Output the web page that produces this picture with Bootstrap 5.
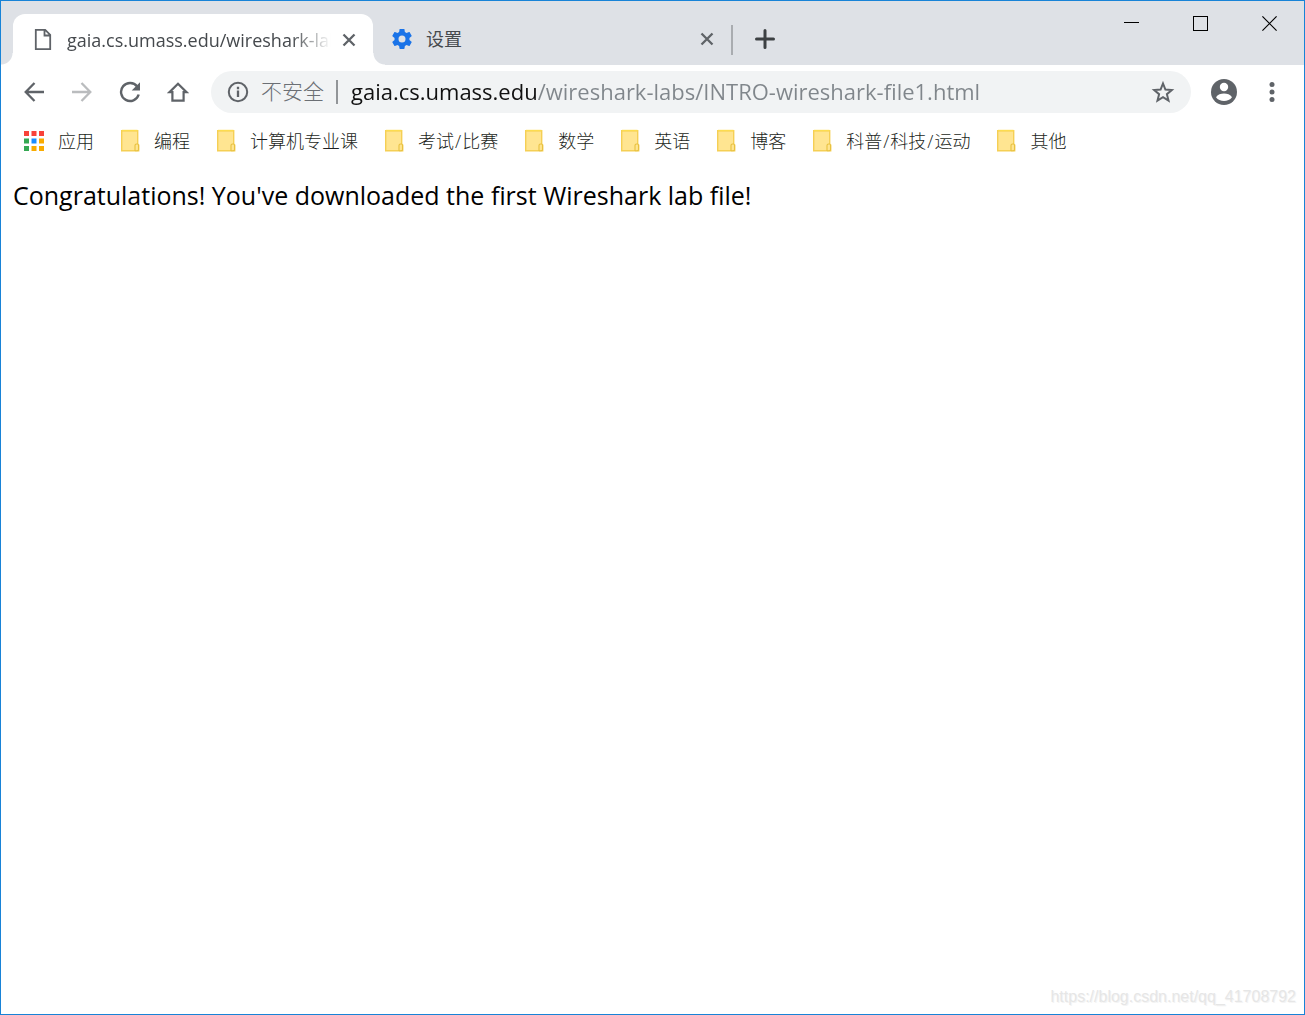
<!DOCTYPE html>
<html lang="zh-CN">
<head>
<meta charset="utf-8">
<meta name="viewport" content="width=device-width, initial-scale=1">
<title>gaia.cs.umass.edu/wireshark-labs/INTRO-wireshark-file1.html</title>
<link href="https://cdn.jsdelivr.net/npm/bootstrap@5.3.0/dist/css/bootstrap.min.css" rel="stylesheet">
<style>
  body { font-family: "Open Sans", "Noto Sans CJK SC", sans-serif; color: #000; }
  .browser { border: 1px solid #1883d7; }
  .tab-strip { background: #dee1e6; height: 64px; padding-left: 12px; }
  .tab-item { width: 360px; height: 50px; margin-top: 13px; padding: 0 14px 0 18px; font-size: 18px; color: #45494d; }
  .tab-on { background: #fff; border-radius: 12px 12px 0 0; height: 51px; }
  .tab-off { width: 358px; padding-left: 17px; }
  .tab-on::before, .tab-on::after { content: ""; position: absolute; bottom: 0; width: 12px; height: 12px; }
  .tab-on::before { right: 100%; background: radial-gradient(circle at 0 0, transparent 11px, #fff 12px); }
  .tab-on::after { left: 100%; background: radial-gradient(circle at 100% 0, transparent 11px, #fff 12px); }
  .tab-title { margin-left: 12px; height: 28px; line-height: 28px; color: inherit; }
  .tab-fade { -webkit-mask-image: linear-gradient(to right, #000 85%, transparent); mask-image: linear-gradient(to right, #000 85%, transparent); }
  .tab-sep { width: 2px; height: 30px; background: #a9acb0; margin-top: 13px; }
  .plain-btn { border: 0; background: none; padding: 0; display: flex; align-items: center; justify-content: center; flex: none; color: #5f6368; }
  .close-btn { width: 20px; height: 20px; }
  .new-tab { width: 64px; height: 50px; margin-top: 13px; color: #3c4043; }
  .win-btn { width: 69px; height: 44px; color: #000; }
  .tool-row { padding: 6px 8px 6px 9px; }
  .tool-btn { width: 48px; height: 42px; }
  .omnibox { background: #f1f3f4; border-radius: 21px; height: 42px; margin: 0 9px; padding: 0 16px; color: #5f6368; }
  .site-note { font-size: 21px; margin-left: 12px; color: #6b6f74; font-weight: 300; }
  .omni-sep { width: 2px; height: 24px; background: #929598; margin: 0 13px 0 12px; }
  .url-box { border: 0; outline: 0; padding: 0; height: 32px; margin-bottom: 2px; font-size: 22px; color: transparent;
    background: linear-gradient(to right, #111 187px, #80868b 187px); -webkit-background-clip: text; background-clip: text; }
  .mark-row { padding: 0 10px; height: 44px; }
  .mark-link { padding: 0 13px; gap: 14px; font-size: 18px; font-weight: 300; line-height: 28px; color: #1c1f22; }
  .slash { margin: 0 1px; }
  .page-text { font-size: 25px; line-height: 36px; padding: 14px 12px; }
  .watermark { right: 8px; bottom: 5px; font: 16px/24px "Liberation Sans", sans-serif; color: #e6e6e6; text-shadow: 1px 1px 0 #f4f4f4; }
</style>
</head>
<body>
<svg class="d-none" aria-hidden="true">
  <symbol id="folder" viewBox="0 0 20 24">
    <path d="M1.700 1.700h16v14.500h1v5.500h-17z" fill="#ffe591" stroke="#f5cf55" stroke-width="1.400"/>
    <path d="M2 1.500h15.500" stroke="#fcdc50" stroke-width="1.400"/>
    <path d="M15 22v-5.500q0-1.500 1.500-1.500h1q1 0 1 1.500v4q0 1.300-1.500 1.300h-2" fill="#ffe591" stroke="#e8c13f" stroke-width="1.100"/>
  </symbol>
  <symbol id="cross" viewBox="0 0 14 14"><path d="M1.500 1.500l11 11M12.500 1.500l-11 11" stroke="currentColor" stroke-width="2.300"/></symbol>
</svg>
<div class="browser position-relative min-vh-100 d-flex flex-column bg-white">
  <header class="tab-strip d-flex align-items-start">
    <div class="tab-item tab-on position-relative d-flex align-items-center">
      <svg class="flex-shrink-0" width="24" height="24" viewBox="0 0 24 24" fill="none" stroke="#5f6368" stroke-width="1.800"><path d="M4.800 1.800h9.400l5 5v14.400H4.800zM13.500 2v5.500H19"/></svg>
      <a href="#" class="tab-title tab-fade flex-grow-1 overflow-hidden text-nowrap text-decoration-none">gaia.cs.umass.edu/wireshark-labs</a>
      <button class="plain-btn close-btn ms-2" aria-label="关闭标签页"><svg width="14" height="14"><use href="#cross"/></svg></button>
    </div>
    <div class="tab-item tab-off d-flex align-items-center">
      <svg class="flex-shrink-0" width="24" height="24" viewBox="0 0 24 24" fill="#1a73e8"><path d="M19.430 12.980c.04-.32.07-.64.07-.98s-.03-.66-.07-.98l2.110-1.650c.19-.15.24-.42.12-.64l-2-3.460c-.12-.22-.39-.3-.61-.22l-2.490 1c-.52-.4-1.080-.73-1.690-.98l-.38-2.650C14.460 2.180 14.250 2 14 2h-4c-.25 0-.46.18-.49.42l-.38 2.650c-.61.25-1.170.59-1.690.98l-2.490-1c-.23-.09-.49 0-.61.22l-2 3.460c-.13.22-.07.49.12.64l2.110 1.650c-.04.32-.07.65-.07.98s.03.66.07.98l-2.110 1.650c-.19.15-.24.42-.12.64l2 3.460c.12.22.39.3.61.22l2.490-1c.52.4 1.080.73 1.690.98l.38 2.650c.03.24.24.42.49.42h4c.25 0 .46-.18.49-.42l.38-2.650c.61-.25 1.170-.59 1.690-.98l2.490 1c.23.09.49 0 .61-.22l2-3.460c.12-.22.07-.49-.12-.64l-2.110-1.650zM12 15.500a3.500 3.500 0 1 1 0-7 3.500 3.500 0 0 1 0 7z"/></svg>
      <a href="#" class="tab-title flex-grow-1 text-decoration-none">设置</a>
      <button class="plain-btn close-btn" aria-label="关闭标签页"><svg width="14" height="14"><use href="#cross"/></svg></button>
    </div>
    <div class="tab-sep align-self-center ms-n1"></div>
    <button class="plain-btn new-tab" aria-label="新标签页"><svg width="20" height="20" viewBox="0 0 20 20"><path d="M10 1.500v17M1.500 10h17" stroke="currentColor" stroke-width="3" stroke-linecap="round"/></svg></button>
    <div class="d-flex ms-auto">
      <button class="plain-btn win-btn" aria-label="最小化"><svg width="15" height="15" shape-rendering="crispEdges"><path d="M0 6.500h15" stroke="#000"/></svg></button>
      <button class="plain-btn win-btn" aria-label="最大化"><svg width="15" height="15"><rect x=".5" y=".5" width="14" height="14" fill="none" stroke="#000"/></svg></button>
      <button class="plain-btn win-btn" aria-label="关闭"><svg width="15" height="15"><path d="M.4.4l14.200 14.200M14.600.4L.4 14.600" stroke="#000" stroke-width="1.200"/></svg></button>
    </div>
  </header>
  <nav class="tool-row d-flex align-items-center">
    <button class="plain-btn tool-btn" aria-label="后退"><svg width="20" height="20" viewBox="0 0 20 20" fill="none" stroke="currentColor" stroke-width="2.300"><path d="M10.500 1L1.700 10l8.800 9M1.700 10H20"/></svg></button>
    <button class="plain-btn tool-btn" aria-label="前进" disabled><svg width="20" height="20" viewBox="0 0 20 20" fill="none" stroke="#babcbe" stroke-width="2.300"><path d="M9.500 1l8.800 9-8.800 9M18.300 10H0"/></svg></button>
    <button class="plain-btn tool-btn" aria-label="重新加载"><svg width="22" height="22" viewBox="0 0 22 22"><path d="M18.200 5.500A9 9 0 1 0 19.700 13.500" fill="none" stroke="currentColor" stroke-width="2.400"/><path d="M21 1.200v8.300h-8.300z" fill="currentColor"/></svg></button>
    <button class="plain-btn tool-btn" aria-label="主页"><svg width="22" height="22" viewBox="0 0 22 22" fill="none" stroke="currentColor" stroke-width="2.200"><path d="M2.500 11.200h2.900v8.500h11.200v-8.500h2.900L11 2.800z"/></svg></button>
    <div class="omnibox d-flex align-items-center flex-grow-1">
      <svg class="flex-shrink-0" width="22" height="22" viewBox="0 0 22 22"><circle cx="11" cy="11" r="9.200" fill="none" stroke="currentColor" stroke-width="2"/><path d="M11 9.500v6.500M11 5.800v2.400" stroke="currentColor" stroke-width="2.300"/></svg>
      <label for="url" class="site-note text-nowrap">不安全</label>
      <div class="omni-sep flex-shrink-0"></div>
      <input id="url" class="url-box flex-grow-1" type="text" spellcheck="false" value="gaia.cs.umass.edu/wireshark-labs/INTRO-wireshark-file1.html">
      <button class="plain-btn" aria-label="添加书签"><svg width="24" height="24" viewBox="0 0 24 24"><path d="M12 3.500l2.400 6.100 6.400.4-4.900 4.200 1.600 6.400-5.500-3.500-5.500 3.500 1.600-6.400L3.200 10l6.400-.4z" fill="none" stroke="currentColor" stroke-width="2"/></svg></button>
    </div>
    <button class="plain-btn tool-btn" aria-label="用户"><svg width="26" height="26" viewBox="0 0 26 26"><circle cx="13" cy="13" r="13" fill="currentColor"/><circle cx="13" cy="8" r="4.200" fill="#fff"/><path d="M5 18.200c1.500-2.700 5-3.700 8-3.700s6.500 1 8 3.700c-1.800 2.500-4.800 3.800-8 3.800s-6.200-1.300-8-3.800z" fill="#fff"/></svg></button>
    <button class="plain-btn tool-btn" aria-label="菜单"><svg width="6" height="22" viewBox="0 0 6 22" fill="currentColor"><circle cx="3" cy="3.500" r="2.500"/><circle cx="3" cy="11" r="2.500"/><circle cx="3" cy="18.500" r="2.500"/></svg></button>
  </nav>
  <nav class="mark-row d-flex align-items-center text-nowrap">
    <a href="#" class="mark-link d-flex align-items-center text-decoration-none"><svg width="20" height="20" viewBox="0 0 20 20"><path d="M0 0h5v5H0zM7.500 0h5v5h-5zM15 0h5v5h-5z" fill="#f8423a"/><path d="M0 7.500h5v5H0zM0 15h5v5H0z" fill="#34a853"/><path d="M7.500 7.500h5v5h-5z" fill="#1a8cff"/><path d="M15 7.500h5v5h-5zM7.500 15h5v5h-5zM15 15h5v5h-5z" fill="#f9ab00"/></svg>应用</a>
    <a href="#" class="mark-link d-flex align-items-center text-decoration-none"><svg width="20" height="24"><use href="#folder"/></svg>编程</a>
    <a href="#" class="mark-link d-flex align-items-center text-decoration-none"><svg width="20" height="24"><use href="#folder"/></svg>计算机专业课</a>
    <a href="#" class="mark-link d-flex align-items-center text-decoration-none"><svg width="20" height="24"><use href="#folder"/></svg><span>考试<span class="slash">/</span>比赛</span></a>
    <a href="#" class="mark-link d-flex align-items-center text-decoration-none"><svg width="20" height="24"><use href="#folder"/></svg>数学</a>
    <a href="#" class="mark-link d-flex align-items-center text-decoration-none"><svg width="20" height="24"><use href="#folder"/></svg>英语</a>
    <a href="#" class="mark-link d-flex align-items-center text-decoration-none"><svg width="20" height="24"><use href="#folder"/></svg>博客</a>
    <a href="#" class="mark-link d-flex align-items-center text-decoration-none"><svg width="20" height="24"><use href="#folder"/></svg><span>科普<span class="slash">/</span>科技<span class="slash">/</span>运动</span></a>
    <a href="#" class="mark-link d-flex align-items-center text-decoration-none"><svg width="20" height="24"><use href="#folder"/></svg>其他</a>
  </nav>
  <main class="page-text">Congratulations! You've downloaded the first Wireshark lab file!</main>
  <div class="watermark position-absolute">https://blog.csdn.net/qq_41708792</div>
</div>
<script src="https://cdn.jsdelivr.net/npm/bootstrap@5.3.0/dist/js/bootstrap.bundle.min.js"></script>
</body>
</html>
